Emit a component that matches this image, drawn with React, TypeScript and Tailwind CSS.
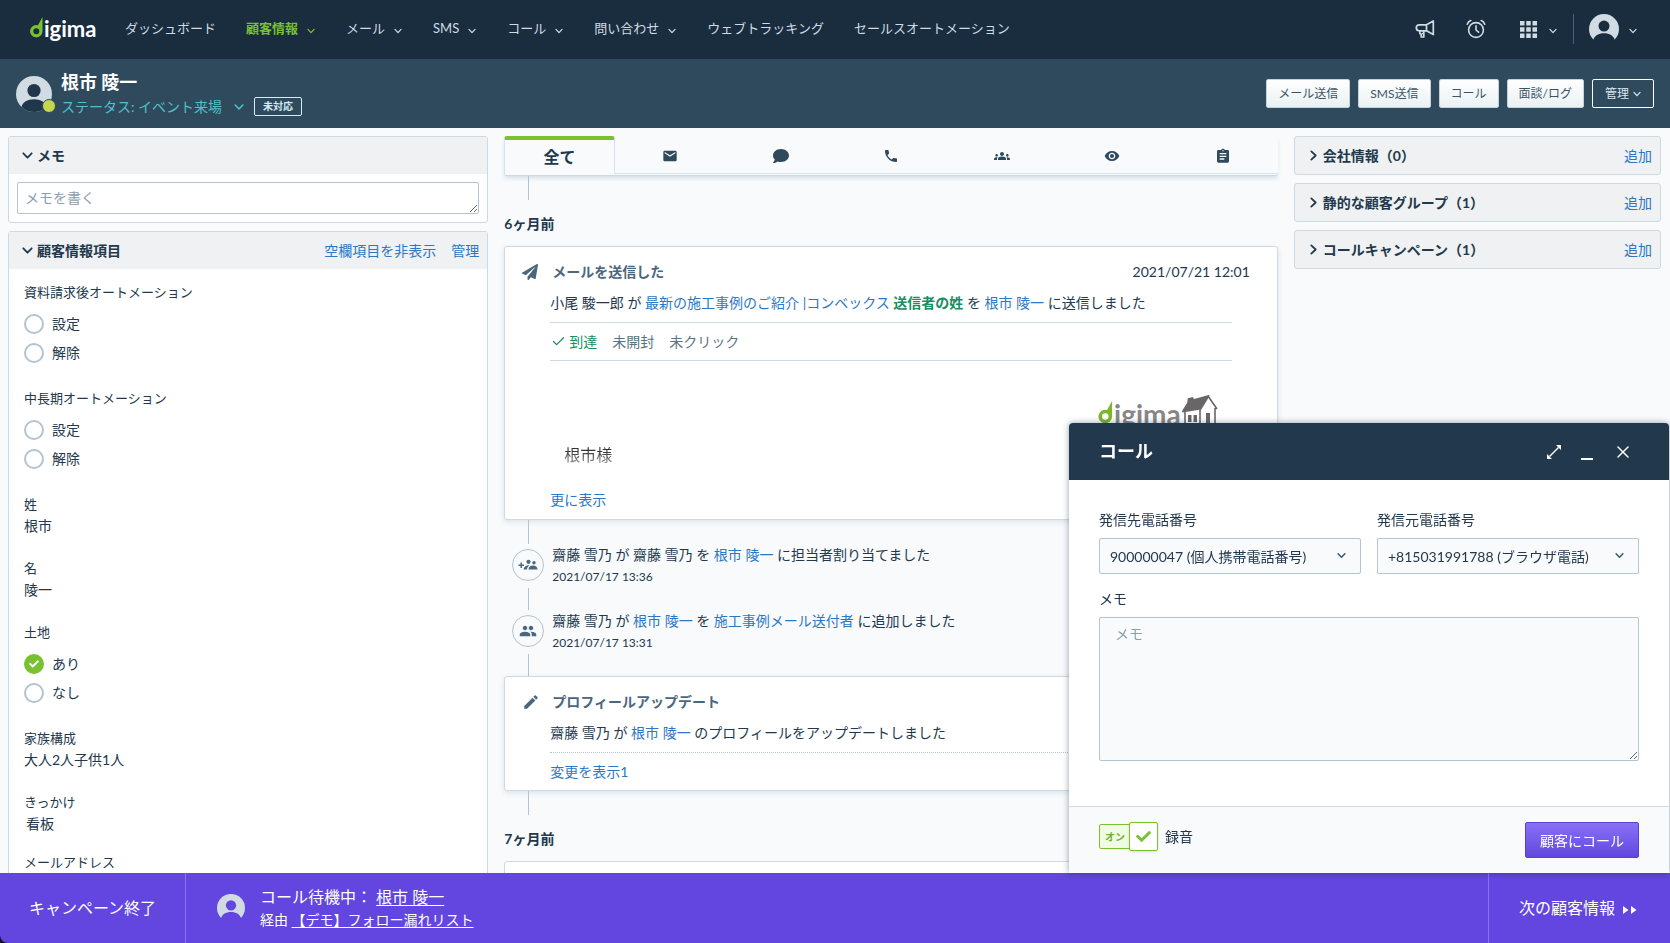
import React from 'react';
import {
  MdEmail,
  MdPhone,
  MdGroups,
  MdVisibility,
  MdGroup,
  MdEdit
} from 'react-icons/md';
import { FaComment, FaPaperPlane, FaCheck } from 'react-icons/fa';
import { Check, X } from 'lucide-react';

const Clipboard: React.FC<{ className?: string }> = ({ className }) => (
  <svg viewBox="0 0 24 24" className={className} fill="currentColor">
    <path
      fillRule="evenodd"
      d="M19 3h-4.200a3 3 0 0 0-5.600 0H5a2 2 0 0 0-2 2v15a2 2 0 0 0 2 2h14a2 2 0 0 0 2-2V5a2 2 0 0 0-2-2ZM12 3a1 1 0 1 1 0 2 1 1 0 0 1 0-2ZM7 7.500h10v2H7Zm0 4h10v2H7Zm0 4h7v2H7Z"
    />
  </svg>
);

const navItems = [
  { label: 'ダッシュボード' },
  { label: '顧客情報', menu: true, active: true },
  { label: 'メール', menu: true },
  { label: 'SMS', menu: true },
  { label: 'コール', menu: true },
  { label: '問い合わせ', menu: true },
  { label: 'ウェブトラッキング' },
  { label: 'セールスオートメーション' }
];

const headerActions = ['メール送信', 'SMS送信', 'コール', '面談/ログ'];

const tabIcons = [
  { name: 'メール', icon: MdEmail },
  { name: 'SMS', icon: FaComment },
  { name: 'コール', icon: MdPhone },
  { name: '面談', icon: MdGroups },
  { name: 'トラッキング', icon: MdVisibility },
  { name: 'フォーム', icon: Clipboard }
];

const sidePanels = [
  '会社情報（0）',
  '静的な顧客グループ（1）',
  'コールキャンペーン（1）'
];

type Field = {
  label: string;
  value?: string;
  multi?: boolean;
  options?: string[];
  selected?: string;
};

const fields: Field[] = [
  { label: '資料請求後オートメーション', options: ['設定', '解除'] },
  { label: '中長期オートメーション', options: ['設定', '解除'] },
  { label: '姓', value: '根市' },
  { label: '名', value: '陵一' },
  { label: '土地', options: ['あり', 'なし'], selected: 'あり' },
  { label: '家族構成', value: '大人2人子供1人' },
  { label: 'きっかけ', value: '看板', multi: true },
  { label: 'メールアドレス', value: '' }
];

const Chevron: React.FC<{ className?: string; dir?: 'down' | 'right' }> = ({ className, dir = 'down' }) => (
  <svg viewBox="0 0 10 10" fill="none" stroke="currentColor" strokeWidth="1.6" strokeLinecap="round" strokeLinejoin="round" className={className}>
    <path d={dir === 'down' ? 'M1.2 3 5 7l3.8-4' : 'M3 1.2 7 5 3 8.8'} />
  </svg>
);

// light disc with the head and shoulders cut out of it
const Avatar: React.FC<{ className?: string; cut: string }> = ({ className, cut }) => (
  <svg viewBox="0 0 36 36" className={className}>
    <circle cx="18" cy="18" r="18" fill="#d0dbe3" />
    <circle cx="18" cy="14.5" r="6.6" fill={cut} />
    <path d="M5 36.500V31.500C6.500 26 11.500 23.200 18 23.200s11.500 2.800 13 8.300v5Z" fill={cut} />
  </svg>
);

const LogoMark: React.FC<{ className?: string; color: string }> = ({ className, color }) => (
  <svg viewBox="0 0 13 21" className={className} fill={color}>
    <path d="M12.500 0v14.200a6.200 6.200 0 1 1-4.600-6L12.500 0Z M6.300 11.200a3 3 0 1 0 0 6 3 3 0 0 0 0-6Z" fillRule="evenodd" />
  </svg>
);

const AssignIcon: React.FC = () => (
  <svg viewBox="0 0 20 12" className="h-3 w-5" fill="currentColor">
    <path d="M2.500 3.500h1.500V5.500h2V7h-2v2H2.500V7h-2V5.500h2Z" />
    <circle cx="10.500" cy="2.800" r="2.100" />
    <circle cx="16" cy="3.800" r="1.700" />
    <path d="M5.500 10.500C6 7.500 8.500 6 11.500 6.200 9.800 7.300 9 8.800 9 10.500ZM10.500 10.500c0-2.400 2-4 4.500-4s4.500 1.600 4.500 4Z" />
  </svg>
);

const TopNav: React.FC = () => (
  <header className="flex h-[59px] shrink-0 items-center bg-[#192d3f] pb-px text-[13px] text-[#d0dbe3]">
    <a href="#home" className="ml-[30px] flex w-[95px] items-center text-white">
      <LogoMark className="mb-1 h-[21px] w-[13px]" color="#7ac12f" />
      <span className="ml-px font-[Lato] text-[22px] leading-6 font-bold">igima</span>
    </a>
    <nav className="flex items-center gap-[30px]">
      {navItems.map((item) => (
        <a
          key={item.label}
          href="#nav"
          className={`flex items-center gap-[9px] whitespace-nowrap ${item.active ? 'font-bold text-[#7ac12f]' : ''}`}
        >
          {item.label}
          {item.menu && <Chevron className="mt-1 mr-px size-2" />}
        </a>
      ))}
    </nav>
    <div className="ml-auto flex items-center pr-[32px]">
      <button aria-label="お知らせ" className="mr-[31px]">
        <svg viewBox="0 0 20 20" className="size-5" fill="none" stroke="currentColor" strokeWidth="1.700" strokeLinejoin="round">
          <path d="M11.500 5.800H4.200C2.500 5.800 1.300 7 1.300 8.800s1.200 3 2.900 3h7.300Z M11.500 5.800 18.300 2v13.600l-6.800-3.800 M4.800 11.800v2.700l1.400.8v2.700h2.600v-6.200 M7 14.500h1.800" />
        </svg>
      </button>
      <button aria-label="リマインダー" className="mr-[34px]">
        <svg viewBox="0 0 20 20" className="size-5" fill="none" stroke="currentColor" strokeWidth="1.600" strokeLinecap="round">
          <circle cx="10" cy="11" r="7.400" />
          <path d="M10 6.800V11l2.600 2.200 M1.300 5.200C1.800 3.500 3 2.200 4.800 1.600 M18.700 5.200C18.200 3.500 17 2.200 15.200 1.600" />
        </svg>
      </button>
      <button aria-label="アプリ" className="flex items-center gap-[12px]">
        <svg viewBox="0 0 17 17" className="size-[17px]" fill="currentColor">
          {[0, 6.25, 12.5].map((y) =>
            [0, 6.25, 12.5].map((x) => <rect key={`${x}-${y}`} x={x} y={y} width="4.500" height="4.500" />)
          )}
        </svg>
        <Chevron className="mt-1 mr-px size-2" />
      </button>
      <span className="mx-[15px] h-[30px] w-px bg-[#46637a]" />
      <button aria-label="アカウント" className="flex items-center gap-[10px]">
        <Avatar className="size-[30px]" cut="#192d3f" />
        <Chevron className="mt-1 mr-px size-2" />
      </button>
    </div>
  </header>
);

const CustomerHeader: React.FC = () => (
  <section className="flex h-[69px] shrink-0 items-center bg-[#2e4a5c] pr-4 pl-4">
    <div className="relative size-9">
      <svg viewBox="0 0 36 36" className="size-9">
        <circle cx="18" cy="18" r="18" fill="#d0dbe3" />
        <circle cx="18" cy="14.5" r="6.6" fill="#20374b" />
        <path d="M5.500 31C6.500 26 11.500 23.200 18 23.200s11.500 2.800 12.500 7.800C27 34.500 23 36 18 36S9 34.500 5.500 31Z" fill="#20374b" />
      </svg>
      <span className="absolute -right-1 -bottom-px size-[14px] rounded-full border border-[#2e4a5c] bg-[#c7d64f]" />
    </div>
    <div className="ml-[9px]">
      <h1 className="text-[18px] leading-[26px] font-bold text-white">根市 陵一</h1>
      <div className="flex items-center text-[14px] leading-6 text-[#4fc0cc]">
        <button>ステータス: イベント来場</button>
        <Chevron className="ml-3 size-[10px]" />
        <span className="ml-[10px] rounded-xs border border-[#d5ebf5] px-2 text-[10px] leading-[17px] font-bold text-[#d5ebf5]">未対応</span>
      </div>
    </div>
    <div className="ml-auto flex gap-2 text-[12px]">
      {headerActions.map((label) => (
        <button
          key={label}
          className="h-[29px] rounded-xs border border-[#c3d2dc] bg-gradient-to-b from-white to-[#eaf1f3] px-[11px] text-[#3b5568]"
        >
          {label}
        </button>
      ))}
      <button className="flex h-[29px] items-center gap-1 rounded-xs border border-white px-3 text-[#dce6ec]">
        管理
        <Chevron className="size-[8px]" />
      </button>
    </div>
  </section>
);

const RadioRow: React.FC<{ name: string; label: string; checked: boolean }> = ({ name, label, checked }) => (
  <label className="flex h-[29px] items-center gap-2 text-[14px]">
    <span className="relative flex size-5">
      <input
        type="radio"
        name={name}
        defaultChecked={checked}
        className="size-5 appearance-none rounded-full border-2 border-[#b3c3d0] bg-white checked:border-[#7ac12f] checked:bg-[#7ac12f]"
      />
      {checked && <FaCheck className="pointer-events-none absolute top-[5px] left-[5px] size-[10px] text-white" />}
    </span>
    {label}
  </label>
);

const FieldItem: React.FC<{ field: Field }> = ({ field }) => {
  if (field.options) {
    return (
      <fieldset>
        <legend className="text-[13px] leading-[22px]">{field.label}</legend>
        <div className="pt-[6px]">
          {field.options.map((option) => (
            <RadioRow key={option} name={field.label} label={option} checked={option === field.selected} />
          ))}
        </div>
      </fieldset>
    );
  }
  return (
    <div className="leading-[22px]">
      <p className="text-[13px]">{field.label}</p>
      <p className={field.multi ? 'h-[18px] pl-[2px] text-[14px]' : 'h-[22px] text-[14px]'}>{field.value}</p>
    </div>
  );
};

const LeftColumn: React.FC = () => (
  <div className="flex min-w-0 flex-col gap-2">
    <section className="rounded-[3px] border border-[#cddae3] bg-white">
      <h2 className="flex h-[37px] items-center gap-1 bg-[#eff1f2] pl-[13px] text-[14px] font-bold">
        <Chevron className="size-[11px]" />
        メモ
      </h2>
      <div className="px-2 py-2">
        <textarea
          aria-label="メモ"
          placeholder="メモを書く"
          className="block h-[32px] w-full rounded-xs border border-[#b3c3d0] px-[7px] py-1 text-[14px] leading-[22px] placeholder:text-[#8ca0b0]"
        />
      </div>
    </section>
    <section className="rounded-[3px] border border-[#cddae3] bg-white">
      <div className="flex h-[37px] items-center bg-[#eff1f2] pr-2 pl-[13px] text-[14px]">
        <h2 className="flex items-center gap-1 font-bold">
          <Chevron className="size-[11px]" />
          顧客情報項目
        </h2>
        <a href="#blank" className="ml-auto text-[#2c78c5]">空欄項目を非表示</a>
        <a href="#manage" className="ml-[15px] text-[#2c78c5]">管理</a>
      </div>
      <div className="flex flex-col gap-5 px-[15px] pt-3 pb-6">
        {fields.map((field) => (
          <FieldItem key={field.label} field={field} />
        ))}
      </div>
    </section>
  </div>
);

const Connector: React.FC<{ className?: string }> = ({ className = 'h-[22px]' }) => (
  <div className={`ml-6 w-px bg-[#b3c3d0] ${className}`} />
);

const Name: React.FC<{ children: React.ReactNode }> = ({ children }) => (
  <a href="#link" className="text-[#2c78c5]">{children}</a>
);

const Event: React.FC<{ icon: React.ReactNode; date: string; children: React.ReactNode }> = ({ icon, date, children }) => (
  <div className="flex gap-2 pl-2 leading-[22px]">
    <span className="mt-[5px] flex size-8 shrink-0 items-center justify-center rounded-full border border-[#b3c3d0] text-[#4b677d]">
      {icon}
    </span>
    <div>
      <p className="text-[14px]">{children}</p>
      <p className="text-[12px]">{date}</p>
    </div>
  </div>
);

const House: React.FC = () => (
  <svg viewBox="0 0 36 36" className="h-9 w-9" fill="none" stroke="#6a6668" strokeWidth="1.600">
    <path d="M1 16 6 8l.500-4 4-1 1 2L26 1 17 14 1 16.500Z" fill="#6a6668" />
    <path d="M26 1l9 13M3 17v16l15 2V15l8-13M33 13v20l-15 2" />
    <path d="M6 20h3.500v7H6ZM11.500 20H15v7h-3.500ZM24 18h4v16h-4Z" fill="#6a6668" stroke="none" />
  </svg>
);

const Timeline: React.FC = () => (
  <div className="min-w-0">
    <div className="rounded-xs border-b border-[#cddae3] pb-px shadow-[0_3px_4px_-1px_rgba(70,110,130,0.2)]">
      <div role="tablist" className="grid h-[38px] grid-cols-7">
        <button role="tab" aria-selected="true" className="rounded-t-[3px] border-x border-t-4 border-x-[#d8e2ea] border-t-[#7ac12f] text-[16px] leading-5 font-bold">
          全て
        </button>
        {tabIcons.map(({ name, icon: Icon }) => (
          <button key={name} role="tab" aria-label={name} className="flex items-center justify-center border-b border-[#d8e2ea] pt-[3px] text-[#2e4a5c]">
            <Icon className="size-4" />
          </button>
        ))}
      </div>
    </div>
    <Connector className="h-6" />
    <h3 className="pt-[15px] pb-[13px] text-[14px] leading-[18px] font-bold">6ヶ月前</h3>

    <article className="rounded-[3px] border border-[#cddae3] bg-white px-[45px] pt-[14px] pb-2 text-[14px] leading-[22px] shadow-[0_2px_5px_rgba(70,110,130,0.15)]">
      <div className="-mr-[18px] -ml-7 flex items-center">
        <FaPaperPlane className="size-4 text-[#4b677d]" />
        <h4 className="ml-[14px] font-bold text-[#4b677d]">メールを送信した</h4>
        <time className="ml-auto">2021/07/21 12:01</time>
      </div>
      <p className="border-b border-[#cddae3] pt-[9px] pb-2">
        小尾 駿一郎 が <Name>最新の施工事例のご紹介 |コンベックス</Name> <a href="#tag" className="font-bold text-[#178f62]">送信者の姓</a> を <Name>根市 陵一</Name> に送信しました
      </p>
      <p className="flex h-[38px] items-center border-b border-[#cddae3] text-[#5b7385]">
        <Check className="mr-[3px] ml-px size-[15px] text-[#178f62]" />
        <span className="text-[#178f62]">到達</span>
        <span className="ml-[15px]">未開封</span>
        <span className="ml-[15px]">未クリック</span>
      </p>
      <div className="h-[128px] pt-[34px] pr-[14px] pl-[14px]">
        <div className="flex h-9 items-start justify-end">
          <LogoMark className="mt-[6px] h-[23px] w-[15px]" color="#7eb52f" />
          <span className="mt-[6px] mr-px ml-px font-[Lato] text-[28px] leading-[26px] font-bold text-[#8a8688]">igima</span>
          <House />
        </div>
        <p className="mt-3 bg-gradient-to-b from-[#333] from-30% to-[#aaa] bg-clip-text text-[16px] leading-6 text-transparent">根市様</p>
      </div>
      <Name>更に表示</Name>
    </article>

    <Connector className="h-6" />
    <Event icon={<AssignIcon />} date="2021/07/17 13:36">
      齋藤 雪乃 が 齋藤 雪乃 を <Name>根市 陵一</Name> に担当者割り当てました
    </Event>
    <Connector />
    <Event icon={<MdGroup className="size-[18px]" />} date="2021/07/17 13:31">
      齋藤 雪乃 が <Name>根市 陵一</Name> を <Name>施工事例メール送付者</Name> に追加しました
    </Event>
    <Connector />

    <article className="rounded-[3px] border border-[#cddae3] bg-white px-[45px] pt-[14px] pb-[7px] text-[14px] leading-[22px] shadow-[0_2px_5px_rgba(70,110,130,0.15)]">
      <div className="-ml-7 flex items-center">
        <MdEdit className="size-[18px] text-[#4b677d]" />
        <h4 className="ml-3 font-bold text-[#4b677d]">プロフィールアップデート</h4>
      </div>
      <p className="border-b border-dotted border-[#b3c3d0] pt-[9px] pb-2">
        齋藤 雪乃 が <Name>根市 陵一</Name> のプロフィールをアップデートしました
      </p>
      <p className="pt-2">
        <Name>変更を表示1</Name>
      </p>
    </article>
    <Connector className="h-6" />
    <h3 className="pt-[15px] pb-[13px] text-[14px] leading-[18px] font-bold">7ヶ月前</h3>
    <article className="h-20 rounded-[3px] border border-[#cddae3] bg-white" />
  </div>
);

const RightColumn: React.FC = () => (
  <div className="flex min-w-0 flex-col gap-2">
    {sidePanels.map((title) => (
      <section key={title} className="flex h-[39px] items-center rounded-[3px] border border-[#cddae3] bg-[#eff1f2] pr-2 pl-[13px] text-[14px]">
        <h2 className="flex items-center gap-1 font-bold">
          <Chevron className="size-[11px]" dir="right" />
          {title}
        </h2>
        <a href="#add" className="ml-auto text-[#2c78c5]">追加</a>
      </section>
    ))}
  </div>
);

const PhoneSelect: React.FC<{ id: string; label: string; value: string }> = ({ id, label, value }) => (
  <div>
    <label htmlFor={id} className="block leading-[22px]">{label}</label>
    <div className="relative mt-[7px]">
      <select id={id} className="h-9 w-full appearance-none rounded-xs border border-[#b3c3d0] bg-[#f8fafc] px-[10px]">
        <option>{value}</option>
      </select>
      <Chevron className="pointer-events-none absolute top-[13px] right-[15px] size-[9px] text-[#3b5568]" />
    </div>
  </div>
);

const CallDialog: React.FC = () => (
  <div role="dialog" aria-label="コール" className="fixed right-px bottom-[70px] w-[600px] rounded-t-[4px] bg-white text-[14px] shadow-[0_0_6px_rgba(25,45,63,0.45)]">
    <div className="flex h-[57px] items-center rounded-t-[4px] bg-[#22384c] pr-9 pl-[30px] text-white">
      <h2 className="text-[18px] font-bold">コール</h2>
      <button aria-label="拡大" className="ml-auto">
        <svg viewBox="0 0 14 14" className="size-[14px]" fill="currentColor">
          <path d="M9 0h5v5ZM5 14H0V9Z" />
          <path d="m2 11 9-9 1 1-9 9Z" />
        </svg>
      </button>
      <button aria-label="最小化" className="ml-5 flex h-4 w-3 items-end">
        <span className="h-[2px] w-full bg-white" />
      </button>
      <button aria-label="閉じる" className="ml-5">
        <X className="size-5" strokeWidth={1.8} />
      </button>
    </div>
    <div className="px-[30px] pt-[29px] pb-[45px]">
      <div className="grid grid-cols-2 gap-4">
        <PhoneSelect id="dest" label="発信先電話番号" value="900000047 (個人携帯電話番号)" />
        <PhoneSelect id="source" label="発信元電話番号" value="+815031991788 (ブラウザ電話)" />
      </div>
      <label htmlFor="call-memo" className="mt-[14px] block leading-[22px]">メモ</label>
      <textarea
        id="call-memo"
        placeholder="メモ"
        className="mt-[7px] block h-[144px] w-full rounded-xs border border-[#b3c3d0] bg-[#f8fafc] px-[15px] py-[5px] leading-[22px] placeholder:text-[#8ca0b0]"
      />
    </div>
    <div className="flex h-[67px] items-start border-t border-[#cddae3] bg-[#f8fafc] px-[30px] pt-[15px]">
      <label className="flex items-center">
        <input type="checkbox" defaultChecked className="sr-only" />
        <span className="h-[25px] w-[31px] rounded-l-xs border border-[#7ac12f] bg-[#f1fae3] pl-[5px] text-[10px] leading-[25px] font-bold text-[#6db325]">オン</span>
        <span className="-ml-px flex h-[29px] w-[29px] items-center justify-center rounded-xs border border-[#7ac12f] bg-white text-[#7ac12f] shadow-sm">
          <FaCheck className="size-[15px]" />
        </span>
        <span className="ml-[7px]">録音</span>
      </label>
      <button className="ml-auto h-9 rounded-xs border border-[#5a3fd0] bg-gradient-to-b from-[#8970f5] to-[#6246df] px-[14px] text-white">
        顧客にコール
      </button>
    </div>
  </div>
);

const CampaignBar: React.FC = () => (
  <footer className="flex h-[70px] shrink-0 rounded-bl-[8px] bg-[#6246df] text-[16px] text-white">
    <button className="w-[186px] border-r border-[#8a74ee]">キャンペーン終了</button>
    <div className="flex items-center pl-[31px]">
      <Avatar className="size-7" cut="#6246df" />
      <div className="ml-[15px]">
        <p className="leading-6">
          コール待機中： <a href="#customer" className="underline underline-offset-2">根市 陵一</a>
        </p>
        <p className="text-[14px] leading-[22px]">
          経由 <a href="#list" className="underline underline-offset-2">【デモ】フォロー漏れリスト</a>
        </p>
      </div>
    </div>
    <button className="ml-auto flex w-[182px] items-center gap-2 border-l border-[#8a74ee] pl-[30px]">
      次の顧客情報
      <svg viewBox="0 0 14 8" className="mt-1 h-2 w-[14px]" fill="currentColor">
        <path d="M0 0l5.500 4L0 8ZM8 0l5.500 4L8 8Z" />
      </svg>
    </button>
  </footer>
);

const App: React.FC = () => {
  return (
    <div
      lang="ja"
      className="flex h-screen flex-col overflow-hidden bg-[#14112b] font-[Lato,'Noto_Sans_CJK_JP',sans-serif] text-[#22384c]"
    >
      <TopNav />
      <CustomerHeader />
      <main className="grid min-h-0 flex-1 grid-cols-[480fr_773fr_367fr] items-start gap-4 overflow-hidden bg-[#f8fafc] pt-2 pr-[9px] pl-2">
        <LeftColumn />
        <Timeline />
        <RightColumn />
      </main>
      <CampaignBar />
      <CallDialog />
    </div>
  );
};

export default App;
